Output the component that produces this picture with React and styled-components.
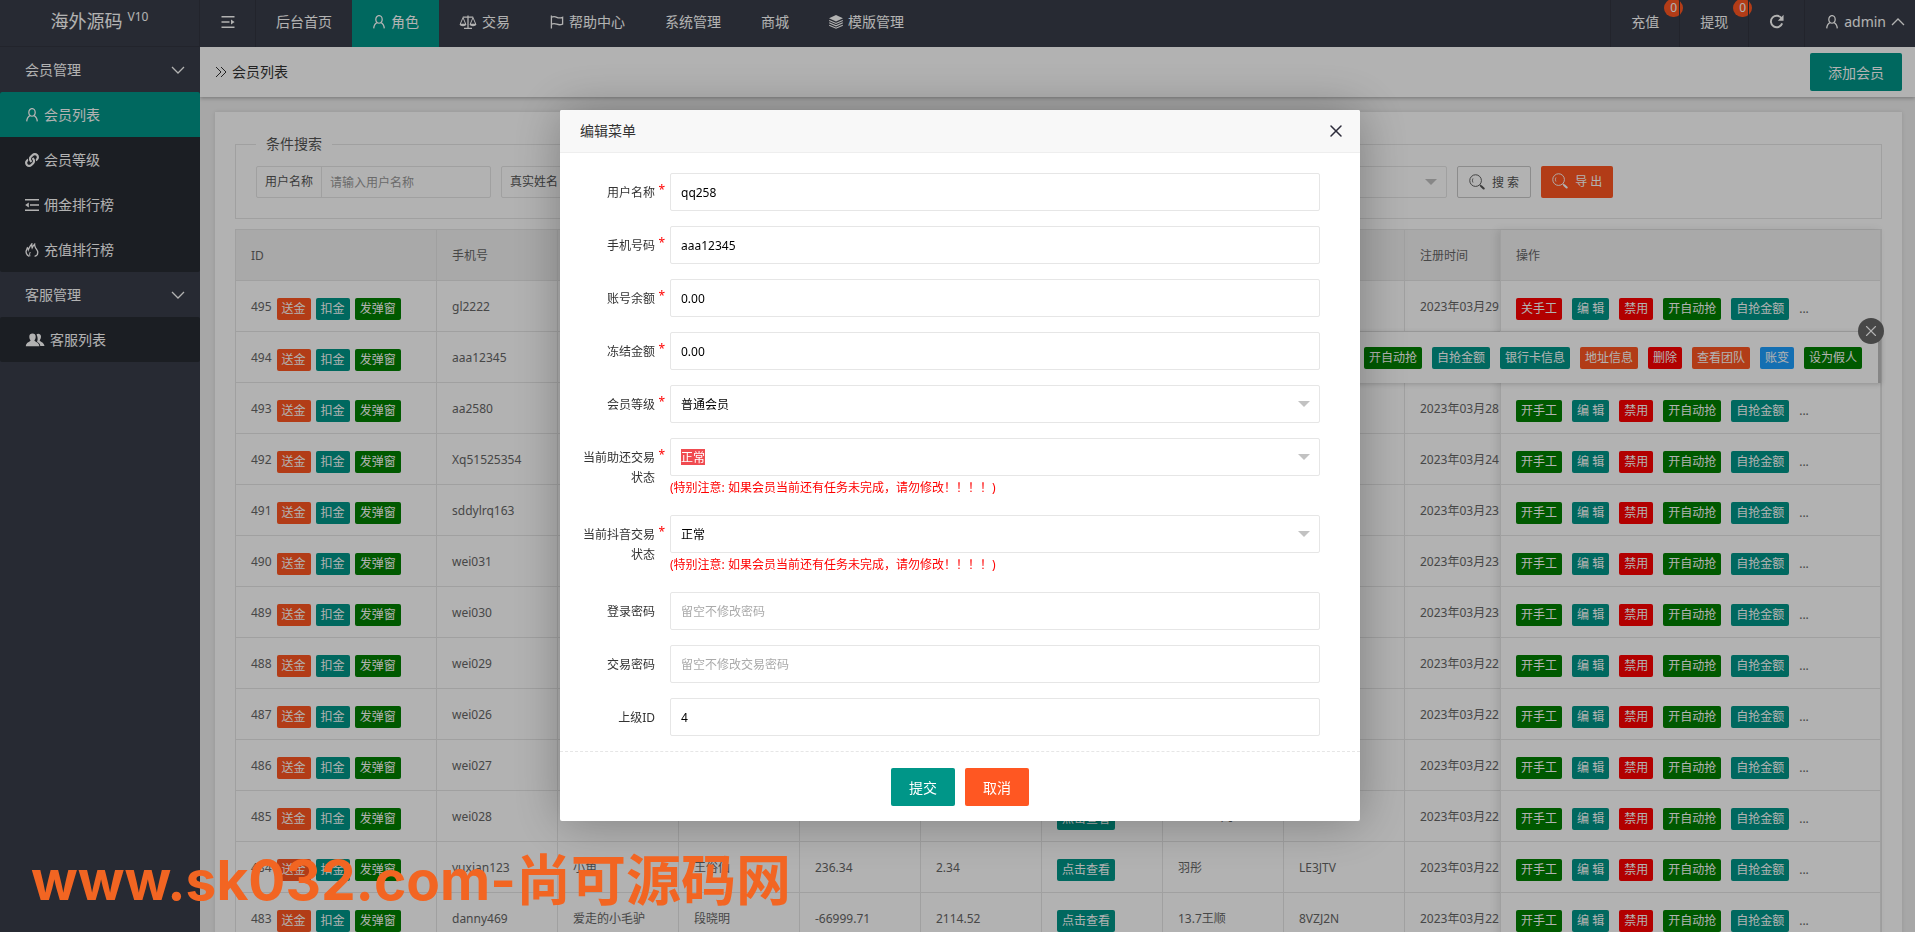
import React, { useState } from 'react';
import styled, { createGlobalStyle } from 'styled-components';
import { X } from 'lucide-react';
import { FaLink } from 'react-icons/fa';

const teal = '#009688';
const orange = '#ff5722';
const red = '#ff0000';
const green = '#008000';
const blue = '#1e9fff';

const GlobalStyle = createGlobalStyle`
  * {
    box-sizing: border-box;
  }

  body {
    margin: 0;
    overflow: hidden;
    font-family: 'Noto Sans', 'Noto Sans CJK SC', sans-serif;
    font-size: 14px;
    line-height: 24px;
    color: #333;
    background: #efefef;
  }

  a {
    color: inherit;
    text-decoration: none;
  }

  button,
  input,
  select {
    font-family: inherit;
    font-size: inherit;
  }
`;

const Page = styled.div`
  display: flex;
  flex-direction: column;
  height: 100vh;
`;

/* ---------- top bar ---------- */

const Header = styled.header`
  display: flex;
  flex: none;
  height: 47px;
  line-height: 43px;
  color: #fff;
  background: #393d49;
`;

const Logo = styled.a`
  display: flex;
  justify-content: center;
  gap: 5px;
  width: 200px;
  font-size: 18px;
  border-right: 1px solid #31343f;
  border-bottom: 1px solid #31343f;

  sup {
    font-size: 12px;
    line-height: 34px;
  }
`;

const Nav = styled.nav`
  display: flex;
  flex: 1;
`;

const NavLink = styled.a`
  display: flex;
  align-items: center;
  gap: 5px;
  height: 47px;
  padding: 0 20px 4px;
  background: ${({ $active }) => ($active ? teal : 'transparent')};
`;

const Toggle = styled.button`
  display: flex;
  align-items: center;
  justify-content: center;
  width: 56px;
  padding: 0 0 4px;
  color: #fff;
  background: none;
  border: 0;
  border-right: 1px solid #31343f;
`;

const ToolLink = styled.a`
  position: relative;
  display: flex;
  align-items: center;
  gap: 5px;
  padding: 0 20px 4px;
  border-left: 1px solid #31343f;
`;

const AdminLink = styled(ToolLink)`
  gap: 5px;
  padding-right: 10px;
`;

const Badge = styled.span`
  position: absolute;
  top: -1px;
  right: -4px;
  width: 19px;
  height: 18px;
  font-size: 12px;
  line-height: 18px;
  text-align: center;
  background: ${orange};
  border-radius: 9px;
`;

/* ---------- side menu ---------- */

const Body = styled.div`
  display: flex;
  flex: 1;
  min-height: 0;
`;

const Side = styled.aside`
  flex: none;
  width: 200px;
  color: #fff;
  background: #393d49;
`;

const SideGroup = styled.a`
  display: flex;
  align-items: center;
  justify-content: space-between;
  height: 45px;
  padding: 0 15px 0 25px;
`;

const SubMenu = styled.div`
  background: #282b33;
  border-radius: 2px;
  overflow: hidden;
`;

const SubLink = styled.a`
  display: flex;
  align-items: center;
  gap: 5px;
  height: 45px;
  padding-left: 25px;
  background: ${({ $active }) => ($active ? teal : 'transparent')};
`;

/* ---------- content ---------- */

const Content = styled.main`
  flex: 1;
  min-width: 0;
  overflow: hidden;
`;

const TitleBar = styled.div`
  position: relative;
  display: flex;
  align-items: center;
  gap: 5px;
  height: 50px;
  padding: 0 13px 0 15px;
  background: #fff;
  box-shadow: 0 1px 4px rgba(0, 0, 0, 0.3);
`;

const Title = styled.span`
  flex: 1;
`;

const Button = styled.button`
  height: 38px;
  padding: 0 18px;
  color: #fff;
  font-size: 14px;
  background: ${({ $color }) => $color || teal};
  border: 0;
  border-radius: 2px;
`;

const Card = styled.section`
  margin: 15px 13px 0 15px;
  padding: 20px;
  background: #fff;
  box-shadow: 0 0 4px rgba(0, 0, 0, 0.1);
`;

const Filter = styled.fieldset`
  display: flex;
  gap: 10px;
  margin: 0 0 10px;
  padding: 10px 20px 20px;
  font-size: 12px;
  border: 1px solid #e6e6e6;

  legend {
    padding: 0 10px;
    color: #555;
    font-size: 14px;
  }
`;

const Group = styled.label`
  display: flex;
  width: ${({ $width }) => $width || 235}px;
  height: 32px;
  color: #555;
  line-height: 30px;
  border: 1px solid #e6e6e6;
  border-radius: 2px;

  span {
    padding: 0 8px;
    border-right: 1px solid #e6e6e6;
  }

  input,
  select {
    flex: 1;
    min-width: 0;
    padding: 0 8px;
    border: 0;
    background-color: transparent;
  }

  input::placeholder {
    color: #999;
  }
`;

const FilterButton = styled.button`
  display: flex;
  align-items: center;
  gap: 7px;
  height: 32px;
  padding: 0 11px;
  color: #555;
  background: #fff;
  border: 1px solid #c9c9c9;
  border-radius: 2px;
`;

const ExportButton = styled(FilterButton)`
  padding-bottom: 3px;
  color: #fff;
  background: ${orange};
  border: 0;
`;

const arrow = `url("data:image/svg+xml,%3Csvg xmlns='http://www.w3.org/2000/svg' width='12' height='6'%3E%3Cpath d='M0 0h12L6 6z' fill='%23c2c2c2'/%3E%3C/svg%3E")`;

const Select = styled.select`
  appearance: none;
  background: ${arrow} no-repeat right 9px center;
`;

/* ---------- table ---------- */

const TableBox = styled.div`
  display: flex;
  color: #666;
  font-size: 12px;
  border: 1px solid #e6e6e6;
`;

const Scroller = styled.div`
  flex: 1;
  min-width: 0;
  overflow: hidden;
`;

const Fixed = styled.div`
  position: relative;
  flex: none;
  width: 381px;
  border-left: 1px solid #e6e6e6;
  box-shadow: -3px 0 8px rgba(0, 0, 0, 0.1);
`;

const Table = styled.table`
  width: ${({ $width }) => $width};
  table-layout: fixed;
  border-collapse: separate;
  border-spacing: 0;

  th,
  td {
    height: 51px;
    padding: 2px 15px 0;
    font-weight: normal;
    line-height: 28px;
    text-align: left;
    white-space: nowrap;
    border-right: 1px solid #e6e6e6;
    border-bottom: 1px solid #e6e6e6;
  }

  th {
    background: #f2f2f2;
  }
`;

const Pills = styled.span`
  display: inline-flex;
  align-items: center;
  gap: ${({ $gap }) => $gap || 10}px;
  height: 22px;
  padding-top: 2px;
  margin-left: ${({ $inset }) => $inset || 0}px;
  vertical-align: middle;
`;

const Pill = styled.button`
  height: 22px;
  padding: 0 5px;
  color: #fff;
  font-size: 12px;
  line-height: 22px;
  white-space: nowrap;
  background: ${({ $color }) => $color};
  border: 0;
  border-radius: 2px;
`;

const RowTip = styled.div`
  position: absolute;
  z-index: 2;
  top: 102px;
  right: 0;
  display: flex;
  align-items: center;
  gap: 10px;
  height: 51px;
  padding: 0 16px 0 15px;
  background: #fff;
  border-right: 3px solid #c1c1c1;
  box-shadow: 0 1px 5px rgba(0, 0, 0, 0.2);
`;

const TipClose = styled.button`
  position: absolute;
  top: -14px;
  right: -6px;
  display: flex;
  align-items: center;
  justify-content: center;
  width: 26px;
  height: 26px;
  padding: 0;
  color: #fff;
  background: #666;
  border: 0;
  border-radius: 50%;
`;

/* ---------- dialog ---------- */

const Shade = styled.div`
  position: fixed;
  inset: 0;
  z-index: 10;
  display: flex;
  align-items: center;
  justify-content: center;
  padding: 0 0 2px 5px;
  background: rgba(0, 0, 0, 0.3);
`;

const Dialog = styled.form`
  width: 800px;
  max-width: 100%;
  font-size: 12px;
  background: #fff;
  border-radius: 2px;
  box-shadow: 1px 1px 50px rgba(0, 0, 0, 0.3);
`;

const DialogHead = styled.div`
  display: flex;
  align-items: center;
  justify-content: space-between;
  height: 43px;
  padding: 0 14px 0 20px;
  font-size: 14px;
  background: #f8f8f8;
  border-bottom: 1px solid #eee;
  border-radius: 2px 2px 0 0;
`;

const CloseButton = styled.button`
  display: flex;
  padding: 0;
  color: #2d2c3b;
  background: none;
  border: 0;
`;

const Fields = styled.div`
  display: flex;
  flex-direction: column;
  gap: 15px;
  padding: 20px 40px 15px 0;
`;

const Field = styled.div`
  display: flex;
  align-items: flex-start;
`;

const FieldLabel = styled.label`
  position: relative;
  width: 110px;
  padding: 10px 15px 0;
  line-height: 20px;
  text-align: right;

  &::after {
    content: ${({ $required }) => ($required ? "'*'" : 'none')};
    position: absolute;
    top: 7px;
    right: 5px;
    color: ${red};
  }
`;

const Control = styled.div`
  flex: 1;

  input,
  select {
    display: block;
    width: 100%;
    height: 38px;
    padding: 1px 10px 0;
    color: #000;
    border: 1px solid #e6e6e6;
    border-radius: 2px;
  }

  input::placeholder {
    color: #aaa;
  }
`;

/* the chosen value of a focused drop-down is drawn as selected text */
const MarkedSelect = styled(Select)`
  && {
    color: #fff;
    background: ${arrow} no-repeat right 9px center,
      linear-gradient(#f04b50, #f04b50) no-repeat 10px center / 24px 16px;
  }
`;

const Help = styled.p`
  margin: 0;
  color: ${red};
  line-height: 24px;
`;

const DialogFoot = styled.div`
  display: flex;
  justify-content: center;
  gap: 10px;
  padding: 16px 0 15px;
  border-top: 1px dashed #e6e6e6;
`;

const Watermark = styled.div`
  position: fixed;
  z-index: 20;
  bottom: 12px;
  left: 31px;
  color: #f26522;
  font-family: Inter, 'Noto Sans CJK SC', sans-serif;
  font-size: 55px;
  font-weight: 700;
  line-height: 80px;
  white-space: nowrap;
  pointer-events: none;
`;

/* ---------- icons ---------- */

const Icon = ({ w = 14, h = 14, box = '0 0 14 14', children }) => (
  <svg width={w} height={h} viewBox={box} fill="none" stroke="currentColor" strokeWidth="1.3" aria-hidden="true">
    {children}
  </svg>
);

const UserIcon = () => (
  <Icon>
    <ellipse cx="7" cy="4.4" rx="3.2" ry="3.8" />
    <path d="M5 7.6C3 8.6 1.9 10.6 1.7 13.4M9 7.6c2 1 3.1 3 3.3 5.8" />
  </Icon>
);

const ScaleIcon = () => (
  <Icon w={18} box="0 0 18 14">
    <path d="M9 .4v12.6M5 13.3h8M3.8 2.2h10.4" />
    <path d="M4 2.6 1.2 9.2h5.6zM14 2.6l-2.8 6.6h5.6z" strokeWidth="1" />
    <path d="M.6 9h6.800c-.4 3-6.400 3-6.800 0zM10.600 9h6.800c-.4 3-6.400 3-6.800 0z" fill="currentColor" stroke="none" />
  </Icon>
);

const FlagIcon = () => (
  <Icon>
    <path d="M1.400.6v12.800M1.400 2.200c2-.9 3.800-.7 5.400.1s3.400.9 5.800 0v6.800c-2.200.9-4 .8-5.800.1s-3.400-.9-5.400 0" />
  </Icon>
);

const LayersIcon = () => (
  <Icon>
    <path d="M7 0 14 3.200 7 6.400 0 3.200z" fill="currentColor" stroke="none" />
    <path d="M.2 5.400 7 8.400l6.800-3M.2 7.800 7 10.800l6.800-3M.2 10.200 7 13.200l6.800-3" strokeWidth="1.100" />
  </Icon>
);

const MenuIcon = () => (
  <Icon>
    <path d="M.5 1.800h13M.5 7h8M.5 12.200h13" strokeWidth="1.600" />
    <path d="M13.600 7 10 4.400v5.200z" fill="currentColor" stroke="none" />
  </Icon>
);

const OutdentIcon = () => (
  <Icon>
    <path d="M0 1.800h14M5 7h9M0 12.200h14" strokeWidth="1.600" />
    <path d="M.2 7 3.800 4.400v5.200z" fill="currentColor" stroke="none" />
  </Icon>
);

const FireIcon = () => (
  <Icon>
    <path d="M4.400 13.300C1.600 12.200.9 10.200 1.100 8.400c.2-1.400.9-2.300 1.300-3.600.6.5.9 1.100 1 1.900C4.200 5 4.800 3.200 6.800.9c-.1 1.700-.1 2.700.3 4C7.700 3.500 8.200 2.500 9.600 1.200c0 1.500.3 2.500 1 3.700.9 1.400 2.200 2.600 2.200 4.500 0 2-1.300 3.500-3.200 3.900" />
    <path d="M5 13.200c-.6-1.600-.4-2.800.3-4.200" strokeWidth="1" />
  </Icon>
);

const UsersIcon = () => (
  <Icon w={20} box="0 0 20 14">
    <path d="M11.500 1.400c1-1.200 4.500-1 4.500 2.100 0 1.800-.7 2.900-1.300 3.700 0 1.600 4.300 1.700 4.800 5.800h-4.200c-.4-2.600-1.800-3.400-3.300-4.200.6-1.200 1.300-3.600-.5-7.400z" fill="currentColor" stroke="none" />
    <path d="M7.500.6c2 0 3.200 1.200 3.200 3.100 0 1.700-.7 2.900-1.300 3.600 0 1.800 4.700 1.500 5 5.900H.8c.3-4.400 4.800-4.100 4.800-5.900-.6-.7-1.300-1.900-1.300-3.600C4.300 1.800 5.500.6 7.500.6z" fill="currentColor" stroke="none" />
  </Icon>
);

const RefreshIcon = () => (
  <Icon w={15} h={15}>
    <path d="M11.800 4.200A5.400 5.400 0 1 0 12.300 8.800" strokeWidth="1.800" />
    <path d="M13.600.8v5.400H8.200z" fill="currentColor" stroke="none" />
  </Icon>
);

const SearchIcon = () => (
  <Icon w={16} h={16} box="0 0 17 17">
    <circle cx="7" cy="7" r="6.200" strokeWidth="1" />
    <path d="M4.200 4.800c-.7 1.300-.7 2.900 0 4.200" strokeWidth="1" />
    <path d="m11.600 11.600 1 1" />
    <path d="m13 13 2.600 2.400" strokeWidth="2.200" strokeLinecap="round" />
  </Icon>
);

const DownIcon = () => (
  <Icon h={8} box="0 0 14 8">
    <path d="m1 1 6 6 6-6" />
  </Icon>
);

const UpIcon = () => (
  <Icon h={8} box="0 0 14 8">
    <path d="m1 7 6-6 6 6" />
  </Icon>
);

const ForwardIcon = () => (
  <Icon w={12} h={12} box="0 0 12 12">
    <path d="m1 1 5 5-5 5M6 1l5 5-5 5" strokeWidth="1" />
  </Icon>
);

/* ---------- data ---------- */

const navItems = [
  { text: '后台首页' },
  { text: '角色', icon: <UserIcon />, active: true },
  { text: '交易', icon: <ScaleIcon /> },
  { text: '帮助中心', icon: <FlagIcon /> },
  { text: '系统管理' },
  { text: '商城' },
  { text: '模版管理', icon: <LayersIcon /> },
];

const menu = [
  {
    title: '会员管理',
    items: [
      { text: '会员列表', icon: <UserIcon />, active: true },
      { text: '会员等级', icon: <FaLink size={14} /> },
      { text: '佣金排行榜', icon: <OutdentIcon /> },
      { text: '充值排行榜', icon: <FireIcon /> },
    ],
  },
  { title: '客服管理', items: [{ text: '客服列表', icon: <UsersIcon /> }] },
];

const columns = ['ID', '手机号', '', '', '', '', '', '', '', '注册时间'];

const members = [
  { id: 495, phone: 'gl2222', day: 29, manual: true },
  { id: 494, phone: 'aaa12345', day: 28 },
  { id: 493, phone: 'aa2580', day: 28 },
  { id: 492, phone: 'Xq51525354', day: 24 },
  { id: 491, phone: 'sddylrq163', day: 23 },
  { id: 490, phone: 'wei031', day: 23 },
  { id: 489, phone: 'wei030', day: 23 },
  { id: 488, phone: 'wei029', day: 22 },
  { id: 487, phone: 'wei026', day: 22 },
  { id: 486, phone: 'wei027', day: 22 },
  { id: 485, phone: 'wei028', day: 22, parent: '13.17王凡' },
  { id: 484, phone: 'yuxian123', day: 22, nick: '小角', name: '王俗仙', balance: '236.34', frozen: '2.34', parent: '羽彤', code: 'LE3JTV' },
  { id: 483, phone: 'danny469', day: 22, nick: '爱走的小毛驴', name: '段晓明', balance: '-66999.71', frozen: '2114.52', parent: '13.7王顺', code: '8VZJ2N' },
];

const tipActions = [
  ['开自动抢', green],
  ['自抢金额', teal],
  ['银行卡信息', teal],
  ['地址信息', orange],
  ['删除', red],
  ['查看团队', orange],
  ['账变', blue],
  ['设为假人', green],
];

const warning = '(特别注意: 如果会员当前还有任务未完成，请勿修改！！！！)';

const fields = [
  { name: 'user', label: '用户名称', required: true, value: 'qq258' },
  { name: 'phone', label: '手机号码', required: true, value: 'aaa12345' },
  { name: 'balance', label: '账号余额', required: true, value: '0.00' },
  { name: 'frozen', label: '冻结金额', required: true, value: '0.00' },
  { name: 'level', label: '会员等级', required: true, options: ['普通会员'] },
  { name: 'helpState', label: '当前助还交易状态', required: true, options: ['正常'], marked: true, help: warning },
  { name: 'douyinState', label: '当前抖音交易状态', required: true, options: ['正常'], help: warning },
  { name: 'password', label: '登录密码', placeholder: '留空不修改密码' },
  { name: 'payPassword', label: '交易密码', placeholder: '留空不修改交易密码' },
  { name: 'parentId', label: '上级ID', value: '4' },
];

/* ---------- parts ---------- */

const TopBar = () => (
  <Header>
    <Logo href="#">
      海外源码<sup>V10</sup>
    </Logo>
    <Nav>
      <Toggle type="button" aria-label="收起菜单">
        <MenuIcon />
      </Toggle>
      {navItems.map((item) => (
        <NavLink key={item.text} href="#" $active={item.active}>
          {item.icon}
          {item.text}
        </NavLink>
      ))}
    </Nav>
    <ToolLink href="#">
      充值<Badge>0</Badge>
    </ToolLink>
    <ToolLink href="#">
      提现<Badge>0</Badge>
    </ToolLink>
    <ToolLink href="#" aria-label="刷新">
      <RefreshIcon />
    </ToolLink>
    <AdminLink href="#">
      <UserIcon />
      admin
      <UpIcon />
    </AdminLink>
  </Header>
);

const SideMenu = () => (
  <Side>
    {menu.map((group) => (
      <nav key={group.title}>
        <SideGroup href="#">
          {group.title}
          <DownIcon />
        </SideGroup>
        <SubMenu>
          {group.items.map((item) => (
            <SubLink key={item.text} href="#" $active={item.active}>
              {item.icon}
              {item.text}
            </SubLink>
          ))}
        </SubMenu>
      </nav>
    ))}
  </Side>
);

const SearchForm = () => (
  <Filter>
    <legend>条件搜索</legend>
    <Group>
      <span>用户名称</span>
      <input placeholder="请输入用户名称" />
    </Group>
    <Group>
      <span>真实姓名</span>
      <input />
    </Group>
    <Group>
      <input aria-label="手机号" />
    </Group>
    <Group>
      <input aria-label="注册时间" />
    </Group>
    <Group $width={211}>
      <Select aria-label="会员等级" />
    </Group>
    <FilterButton type="button">
      <SearchIcon />搜 索
    </FilterButton>
    <ExportButton type="button">
      <SearchIcon />导 出
    </ExportButton>
  </Filter>
);

const MemberTable = () => {
  const [tipOpen, setTipOpen] = useState(true);

  return (
    <TableBox>
      <Scroller>
        <Table $width="1290px">
          <colgroup>
            <col width="201" />
            {columns.slice(1).map((_, i) => (
              <col key={i} width="121" />
            ))}
          </colgroup>
          <thead>
            <tr>
              {columns.map((text, i) => (
                <th key={i}>{text}</th>
              ))}
            </tr>
          </thead>
          <tbody>
            {members.map((m) => (
              <tr key={m.id}>
                <td>
                  {m.id}
                  <Pills $gap={5} $inset={5}>
                    <Pill $color={orange}>送金</Pill>
                    <Pill $color={teal}>扣金</Pill>
                    <Pill $color={green}>发弹窗</Pill>
                  </Pills>
                </td>
                <td>{m.phone}</td>
                <td>{m.nick}</td>
                <td>{m.name}</td>
                <td>{m.balance}</td>
                <td>{m.frozen}</td>
                <td>
                  <Pills>
                    <Pill $color={teal}>点击查看</Pill>
                  </Pills>
                </td>
                <td>{m.parent}</td>
                <td>{m.code}</td>
                <td>2023年03月{m.day}</td>
              </tr>
            ))}
          </tbody>
        </Table>
      </Scroller>
      <Fixed>
        <Table $width="100%">
          <thead>
            <tr>
              <th>操作</th>
            </tr>
          </thead>
          <tbody>
            {members.map((m) => (
              <tr key={m.id}>
                <td>
                  <Pills>
                    <Pill $color={m.manual ? red : green}>{m.manual ? '关手工' : '开手工'}</Pill>
                    <Pill $color={teal}>编 辑</Pill>
                    <Pill $color={red}>禁用</Pill>
                    <Pill $color={green}>开自动抢</Pill>
                    <Pill $color={teal}>自抢金额</Pill>
                    <span>...</span>
                  </Pills>
                </td>
              </tr>
            ))}
          </tbody>
        </Table>
        {tipOpen && (
          <RowTip>
            {tipActions.map(([text, color]) => (
              <Pill key={text} $color={color}>
                {text}
              </Pill>
            ))}
            <TipClose type="button" aria-label="收起" onClick={() => setTipOpen(false)}>
              <X size={18} strokeWidth={1.5} />
            </TipClose>
          </RowTip>
        )}
      </Fixed>
    </TableBox>
  );
};

const FieldControl = ({ field }) => {
  if (field.options) {
    const Box = field.marked ? MarkedSelect : Select;
    return (
      <Box id={field.name}>
        {field.options.map((option) => (
          <option key={option}>{option}</option>
        ))}
      </Box>
    );
  }
  return <input id={field.name} type="text" defaultValue={field.value} placeholder={field.placeholder} />;
};

const EditDialog = ({ onClose }) => (
  <Shade>
    <Dialog onSubmit={(e) => e.preventDefault()}>
      <DialogHead>
        编辑菜单
        <CloseButton type="button" aria-label="关闭" onClick={onClose}>
          <X size={20} strokeWidth={1.8} />
        </CloseButton>
      </DialogHead>
      <Fields>
        {fields.map((field) => (
          <Field key={field.name}>
            <FieldLabel htmlFor={field.name} $required={field.required}>
              {field.label}
            </FieldLabel>
            <Control>
              <FieldControl field={field} />
              {field.help && <Help>{field.help}</Help>}
            </Control>
          </Field>
        ))}
      </Fields>
      <DialogFoot>
        <Button type="submit">提交</Button>
        <Button type="button" $color={orange} onClick={onClose}>
          取消
        </Button>
      </DialogFoot>
    </Dialog>
  </Shade>
);

const App = () => {
  const [editing, setEditing] = useState(true);

  return (
    <>
      <GlobalStyle />
      <Page>
        <TopBar />
        <Body>
          <SideMenu />
          <Content>
            <TitleBar>
              <ForwardIcon />
              <Title>会员列表</Title>
              <Button type="button">添加会员</Button>
            </TitleBar>
            <Card>
              <SearchForm />
              <MemberTable />
            </Card>
          </Content>
        </Body>
      </Page>
      {editing && <EditDialog onClose={() => setEditing(false)} />}
      <Watermark>www.sk032.com-尚可源码网</Watermark>
    </>
  );
};

export default App;
